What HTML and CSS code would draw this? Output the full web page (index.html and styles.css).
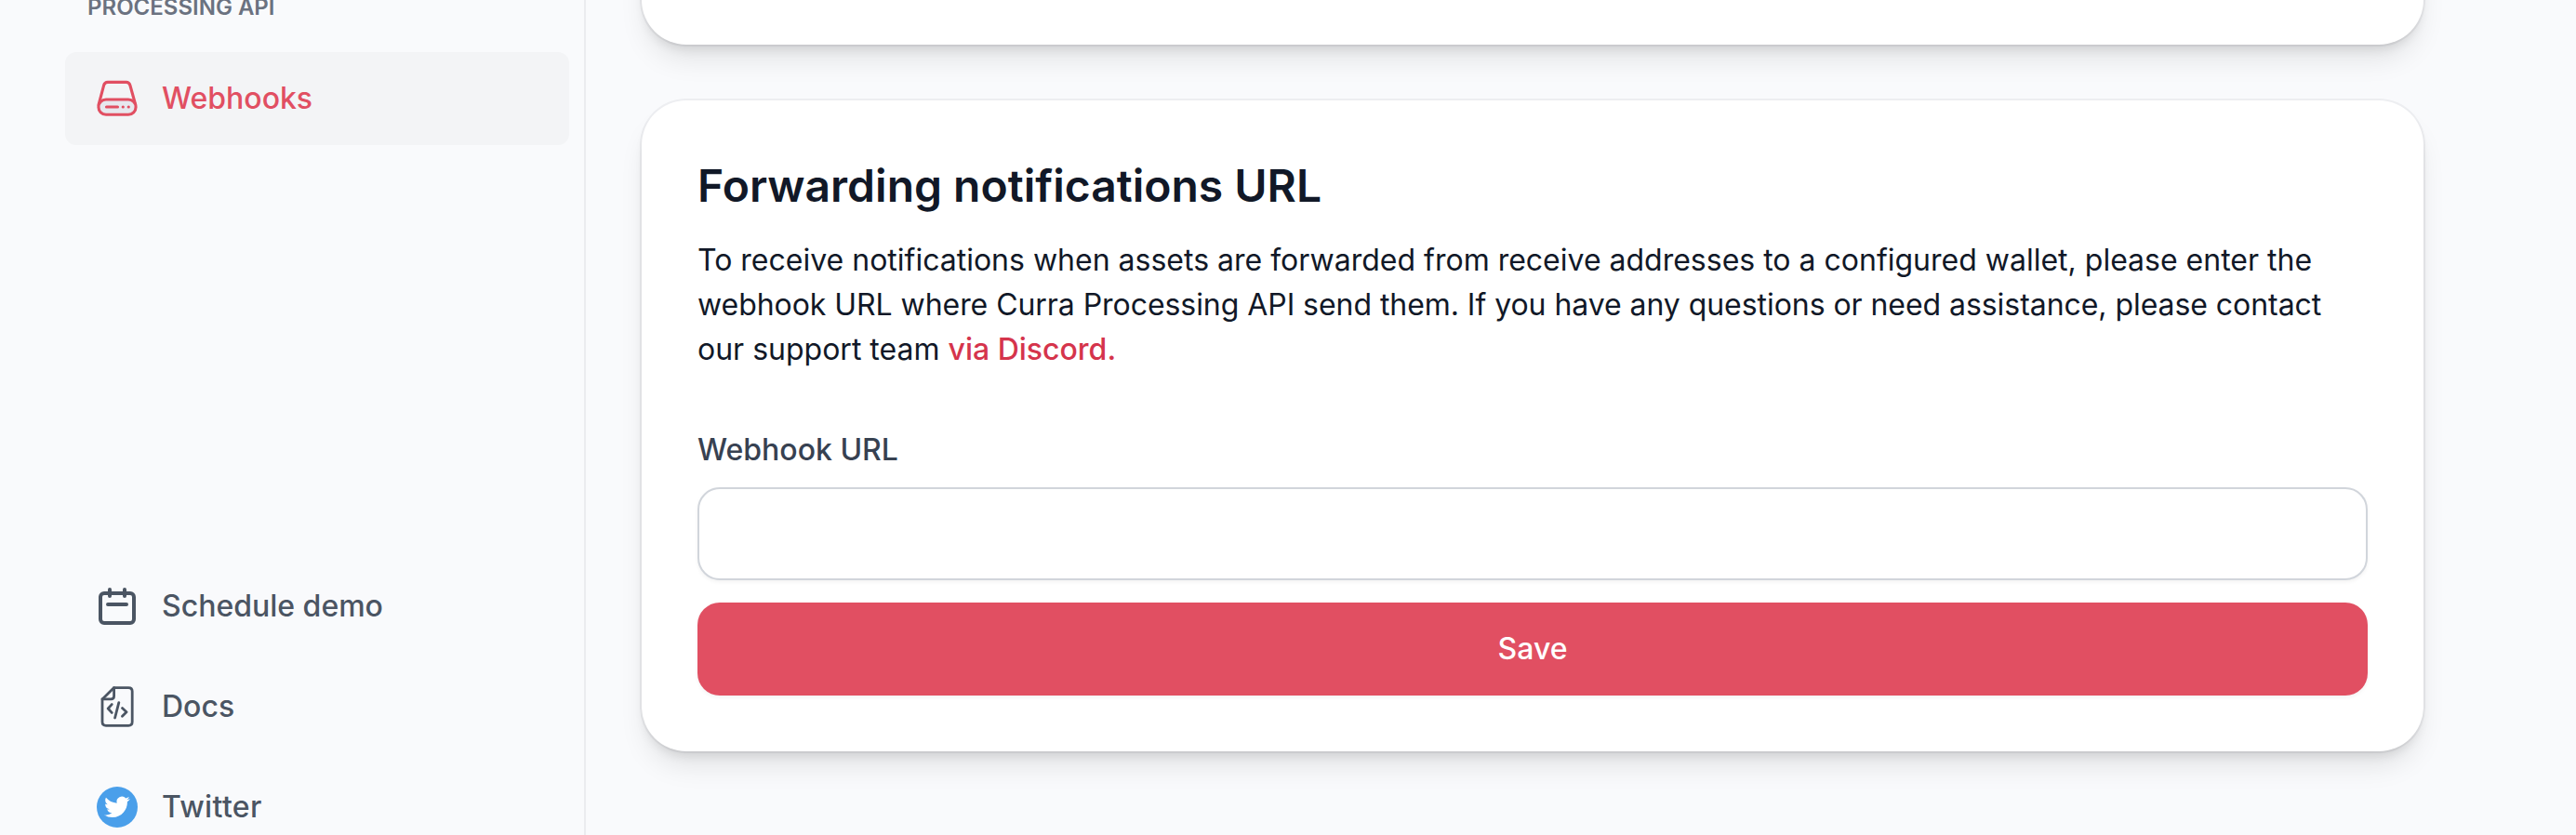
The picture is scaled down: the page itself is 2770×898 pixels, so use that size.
FILE: index.html
```html
<!DOCTYPE html>
<html lang="en">
<head>
<meta charset="utf-8">
<title>Webhooks</title>
<link rel="stylesheet" href="styles.css">
</head>
<body>
<div class="app">
  <aside class="sidebar">
    <nav class="nav">
      <h2 class="nav-heading">PROCESSING API</h2>
      <a class="nav-item active">
        <svg class="icon" viewBox="0 0 48 48" fill="none" stroke="currentColor" stroke-width="3.1" stroke-linecap="round" stroke-linejoin="round">
          <path d="M4 31 9.600 9.800Q10.600 6.400 13.800 6.400H33.700Q36.900 6.400 37.900 9.800L43.800 31"/>
          <rect x="3.900" y="25" width="40.200" height="16.200" rx="8.100" fill="#e7e8ee"/>
          <path d="M12.500 33H24.500M30.200 33h.1M36.200 33h.1"/>
        </svg>
        <span>Webhooks</span>
      </a>
    </nav>
    <nav class="nav">
      <a class="nav-item">
        <svg class="icon" viewBox="0 0 48 48" fill="none" stroke="currentColor" stroke-width="4" stroke-linecap="round">
          <rect x="6" y="10" width="36" height="32" rx="4"/>
          <path d="M16 6v7M32 6v7M14 22h20"/>
        </svg>
        <span>Schedule demo</span>
      </a>
      <a class="nav-item">
        <svg class="icon" viewBox="0 0 48 48" fill="none" stroke="currentColor" stroke-width="2.8" stroke-linecap="round" stroke-linejoin="round">
          <path d="M20.600 3.600H36.200Q40.200 3.600 40.200 7.600V40.300Q40.200 44.300 36.200 44.300H12Q8 44.300 8 40.300V16Z"/>
          <path d="M20.600 3.600V12.500Q20.600 15.800 17.300 15.800H8"/>
          <path d="M18.200 21.600 14.200 26 18.200 30.400M25.800 19.600 21.600 36M29.500 25.600 34 29.800 29.500 34.200"/>
        </svg>
        <span>Docs</span>
      </a>
      <a class="nav-item">
        <svg class="icon" viewBox="0 0 48 48">
          <circle cx="24" cy="24" r="22" fill="#4a9fea"/>
          <path transform="translate(10.100 10.100) scale(1.150)" fill="#fff" d="M23.953 4.570a10 10 0 0 1-2.825.775 4.958 4.958 0 0 0 2.163-2.723c-.951.555-2.005.959-3.127 1.184a4.920 4.920 0 0 0-8.384 4.482C7.690 8.095 4.067 6.130 1.640 3.162a4.822 4.822 0 0 0-.666 2.475c0 1.710.870 3.213 2.188 4.096a4.904 4.904 0 0 1-2.228-.616v.060a4.923 4.923 0 0 0 3.946 4.827 4.996 4.996 0 0 1-2.212.085 4.936 4.936 0 0 0 4.604 3.417 9.867 9.867 0 0 1-6.102 2.105c-.390 0-.779-.023-1.170-.067a13.995 13.995 0 0 0 7.557 2.209c9.053 0 13.998-7.496 13.998-13.985 0-.210 0-.420-.015-.630A9.935 9.935 0 0 0 24 4.590z"/>
        </svg>
        <span class="loose">Twitter</span>
      </a>
    </nav>
  </aside>
  <main class="main">
    <section class="card card-previous"></section>
    <section class="card">
      <h1 class="title">Forwarding notifications URL</h1>
      <p class="description">To receive notifications when assets are forwarded from receive addresses to a configured wallet, please enter the <span class="tight">webhook URL where Curra Processing API send them. If you have any questions or need assistance, please contact</span> our support team <a class="link">via Discord.</a></p>
      <form class="form">
        <label class="label" for="url">Webhook URL</label>
        <input class="input" id="url" type="text">
        <button class="button" type="button">Save</button>
      </form>
    </section>
  </main>
</div>
</body>
</html>
```
FILE: styles.css
```css
* {
  box-sizing: border-box;
}

body {
  margin: 0;
  background: #f9fafc;
  color: #111827;
  font-family: Inter, "Liberation Sans", sans-serif;
  font-size: 32px;
  line-height: 48px;
  overflow: hidden;
}

.app {
  display: flex;
  height: 898px;
  overflow: hidden;
}

.sidebar {
  display: flex;
  flex: none;
  flex-direction: column;
  justify-content: space-between;
  width: 630px;
  height: 918px;
  padding: 0 16px 0 70px;
  border-right: 2px solid #ebecef;
}

.nav {
  display: flex;
  flex-direction: column;
  gap: 8px;
}

.nav-heading {
  height: 48px;
  margin: 0;
  padding-left: 24px;
  color: #6b7280;
  font-size: 24px;
  font-weight: 600;
  line-height: 16px;
}

.nav-item {
  display: flex;
  align-items: center;
  gap: 24px;
  height: 100px;
  padding: 0 32px;
  border-radius: 12px;
  color: #4b5563;
  font-weight: 500;
}

.nav-item.active {
  background: #f3f4f6;
  color: #e14f62;
}

.icon {
  flex: none;
  width: 48px;
  height: 48px;
}

.loose {
  letter-spacing: 0.35px;
}

.main {
  display: flex;
  flex: 1;
  flex-direction: column;
  gap: 60px;
  padding: 0 164px 0 60px;
}

.card {
  flex: none;
  height: 700px;
  padding: 60px;
  border-radius: 48px;
  background: #fff;
  box-shadow: 0 0 0 2px rgba(17, 24, 39, 0.05), 0 20px 30px -6px rgba(0, 0, 0, 0.1), 0 8px 12px -4px rgba(0, 0, 0, 0.1);
}

.card-previous {
  margin-top: -652px;
}

.title {
  margin: 0 0 24px;
  font-size: 48px;
  font-weight: 600;
  line-height: 64px;
}

.description {
  margin: 0 0 60px;
}

.tight {
  letter-spacing: -0.055px;
}

.link {
  color: #d5344c;
  font-weight: 500;
}

.form {
  display: flex;
  flex-direction: column;
}

.label {
  margin-bottom: 16px;
  color: #374151;
  font-weight: 500;
}

.input,
.button {
  width: 100%;
  height: 100px;
  border-radius: 24px;
  font: inherit;
  box-shadow: 0 2px 4px rgba(0, 0, 0, 0.05);
}

.input {
  margin: 0 0 24px;
  padding: 0 24px;
  border: 2px solid #d1d5db;
  background: #fff;
}

.button {
  border: 0;
  background: #e14f62;
  color: #fff;
  font-weight: 500;
}
```
